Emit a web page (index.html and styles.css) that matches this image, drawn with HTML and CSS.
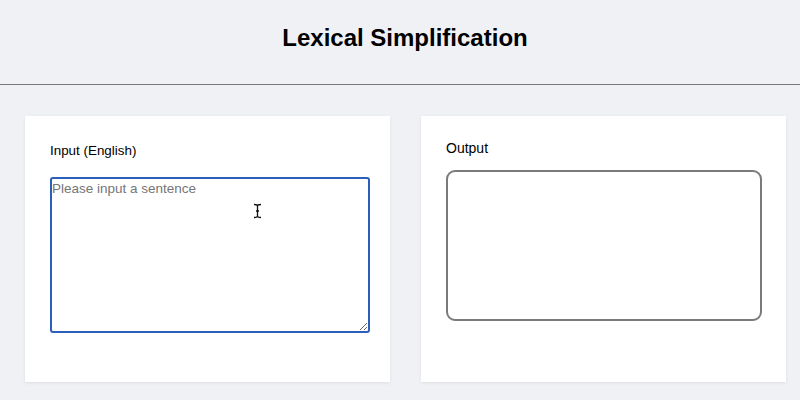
FILE: index.html
```html
<!DOCTYPE html>
<html lang="en">
<head>
<meta charset="utf-8">
<title>Lexical Simplification</title>
<link rel="stylesheet" href="styles.css">
</head>
<body>
<header class="header">
  <h1 class="title">Lexical Simplification</h1>
</header>
<main class="main">
  <section class="card card-input">
    <label class="label label-input" for="src">Input (English)</label>
    <div class="field-wrap">
      <textarea id="src" class="input" placeholder="Please input a sentence"></textarea>
      <svg class="ibeam" width="9" height="16" viewBox="0 0 9 16" aria-hidden="true">
        <path d="M1 1.5 C3 1.5 4.5 1.5 4.5 3 L4.5 13 C4.5 14.5 3 14.5 1 14.5 M8 1.5 C6 1.5 4.5 1.5 4.5 3 M4.5 13 C4.5 14.5 6 14.5 8 14.5 M3 8 L6 8" fill="none" stroke="#111" stroke-width="1.3"/>
      </svg>
    </div>
  </section>
  <section class="card card-output">
    <div class="label label-output">Output</div>
    <div class="output"></div>
  </section>
</main>
</body>
</html>
```
FILE: styles.css
```css
html, body {
  margin: 0;
  padding: 0;
}
body {
  background: #f0f1f5;
  font-family: "Liberation Sans", Arial, sans-serif;
  color: #111;
  width: 800px;
  height: 400px;
  overflow: hidden;
}
.header {
  height: 84px;
  border-bottom: 1px solid #7a7a7a;
  display: flex;
  align-items: center;
  justify-content: center;
}
.title {
  margin: 0 0 8px 10px;
  font-size: 24px;
  font-weight: 700;
  line-height: 28px;
  color: #000;
}
.main {
  display: flex;
  gap: 31px;
  padding: 31px 0 0 25px;
}
.card {
  width: 365px;
  height: 266px;
  background: #fff;
  box-shadow: 0 1px 3px rgba(0, 0, 0, 0.08);
  box-sizing: border-box;
}
.card-input {
  padding: 26px 20px 0 25px;
}
.card-output {
  padding: 24px 24px 0 25px;
}
.label {
  display: block;
  font-size: 14px;
  line-height: 17px;
  color: #000;
}
.label-input {
  font-size: 13.4px;
  margin-bottom: 18px;
}
.label-output {
  margin-bottom: 13px;
}
.field-wrap {
  position: relative;
}
.input {
  display: block;
  width: 320px;
  height: 156px;
  box-sizing: border-box;
  margin: 0;
  border: 2px solid #2b5fb8;
  border-radius: 3px;
  padding: 1px 0;
  font-family: "Liberation Sans", Arial, sans-serif;
  font-size: 13.5px;
  line-height: 17px;
  color: #111;
  background: #fff;
  outline: none;
  resize: both;
}
.input::placeholder {
  color: #767676;
}
.ibeam {
  position: absolute;
  left: 203px;
  top: 26px;
}
.output {
  width: 316px;
  height: 151px;
  box-sizing: border-box;
  border: 2px solid #7a7a7a;
  border-radius: 9px;
  background: #fff;
}
```
